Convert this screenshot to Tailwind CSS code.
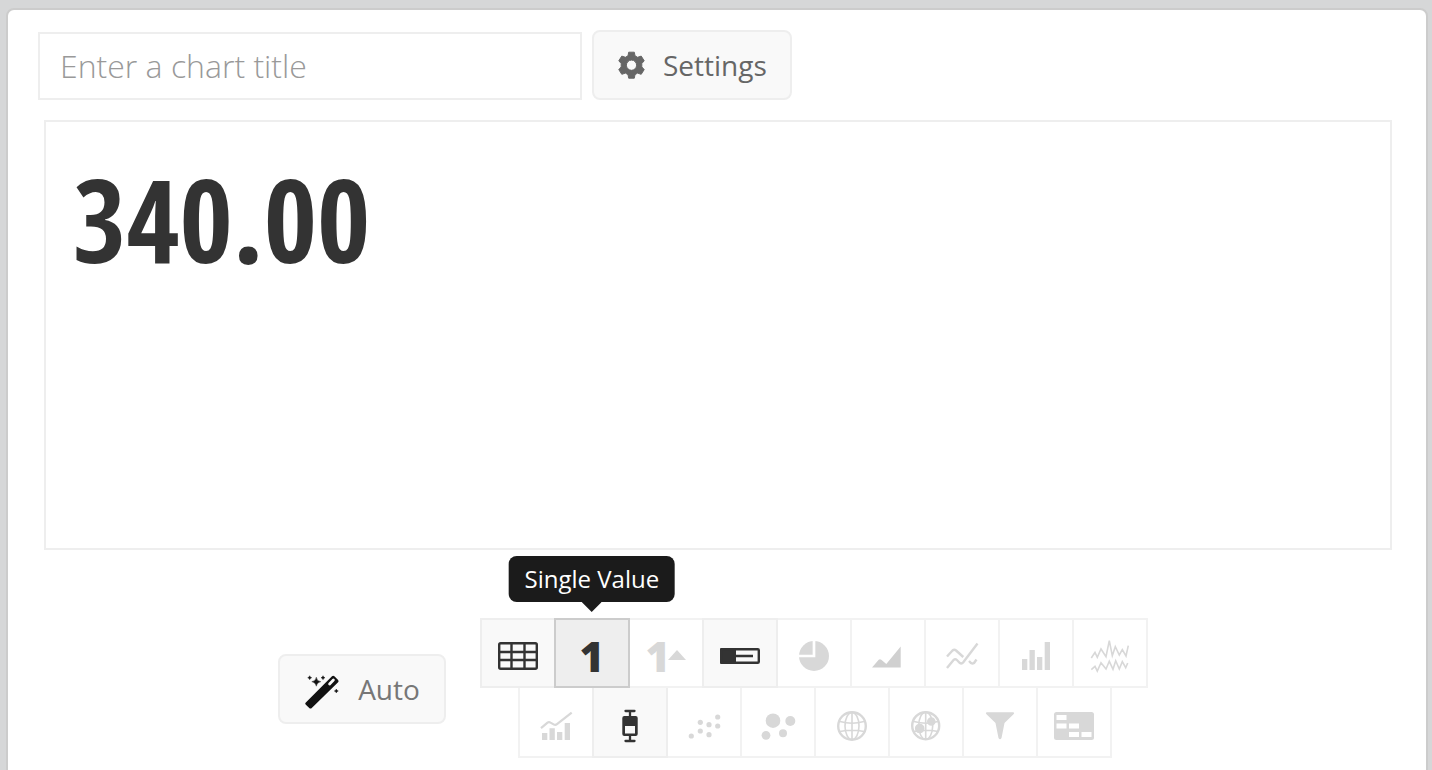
<!DOCTYPE html>
<html lang="en">
<head>
  <meta charset="UTF-8" />
  <meta name="viewport" content="width=device-width, initial-scale=1.0"/>
  <title>Chart Builder</title>
  <script src="https://cdn.jsdelivr.net/npm/@tailwindcss/browser@4"></script>
</head>
<body class="bg-[#d6d7d8] font-['Open_Sans',sans-serif] pl-1.5 pr-1">

  <main class="mt-2 min-h-[800px] bg-white border-2 border-[#ccc] rounded-lg">

    <!-- Title and settings -->
    <div class="flex items-end gap-2.5 pt-5 pl-[30px]">
      <input type="text" aria-label="Chart title" placeholder="Enter a chart title" class="w-[544px] h-[68px] px-5 pb-0.5 border-2 border-[#eee] text-[32px] font-light text-[#333] placeholder:text-[#999]" />
      <button class="flex items-center gap-[17px] h-[70px] pl-6 pr-[23px] bg-[#f9f9f9] border-2 border-[#eee] rounded-lg text-[28px] text-[#666]">
        <svg class="size-7" viewBox="0 0 28 28" fill="currentColor" stroke="currentColor" stroke-linejoin="round"><path fill-rule="evenodd" d="M10.700 1.200h5.600l.7 3.600 2.600 1.500 3.600-1.200 3 4.700-2.400 2.700v3.400l2.400 2.700-3 4.700-3.600-1.200-2.600 1.500-.7 3.600h-5.600l-.7-3.600-2.600-1.500-3.600 1.200-3-4.700 2.400-2.700v-3.400l-2.400-2.700 3-4.700 3.600 1.200 2.600-1.500zM13.500 9.100a5.100 5.100 0 1 0 0 10.200 5.100 5.100 0 0 0 0-10.200z"/></svg>
        Settings
      </button>
    </div>

    <!-- Chart preview -->
    <section class="mt-5 ml-9 mr-[34px] h-[430px] border-2 border-[#eee] px-[27px] pt-4">
      <p class="font-['Open_Sans_Condensed','Open_Sans',sans-serif] text-[115px] leading-[162px] font-bold text-[#333]">340.00</p>
    </section>

    <!-- Chart types -->
    <div class="mt-[68px] pr-2 flex justify-center items-center gap-[34px]">
      <button class="mt-0.5 flex items-center gap-[18px] h-[70px] px-6 bg-[#f9f9f9] border-2 border-[#eee] rounded-lg text-[28px] text-[#777]">
        <svg class="w-9 h-10" viewBox="0 0 36 40" fill="#111">
          <path d="M1.600 33.800L28 7.200q1.200-1 2.400 0l3.700 3.800q1 1.200 0 2.300L7.500 39.200q-1 .8-2 0l-3.900-3.800q-.8-.8 0-1.600z"/>
          <path d="M25.600 15l3.800-3.900" stroke="#f9f9f9" stroke-width="2.800" stroke-linecap="round"/>
          <path d="M12.300 8.200q.6 4 4.500 4.500-3.900.6-4.500 4.500-.6-3.900-4.500-4.500 3.900-.5 4.500-4.500zM5.700 6.700q.3 1.700 2 2-1.700.3-2 2-.3-1.700-2-2 1.700-.3 2-2zM19 6.700q.3 1.700 2 2-1.700.3-2 2-.3-1.700-2-2 1.700-.3 2-2zM32.300 20q.3 1.700 2 2-1.700.3-2 2-.3-1.700-2-2 1.700-.3 2-2z" stroke="#111" stroke-width=".4"/>
        </svg>
        Auto
      </button>

      <div class="flex flex-col items-center">
        <div class="flex pl-0.5 text-[#d8d8d8]">
          <button aria-label="Table" class="-ml-0.5 w-19 h-[70px] pt-1.5 flex justify-center items-center border-2 border-[#eee] bg-[#f9f9f9] text-[#333]">
            <svg class="w-12 h-10" viewBox="0 0 48 40" fill="none" stroke="currentColor" stroke-width="2.400"><rect x="5.200" y="7.200" width="37.600" height="25.600" rx="1.500"/><path d="M17.500 7v26M30.500 7v26M5 16h38M5 24h38"/></svg>
          </button>
          <button aria-describedby="tip" class="relative z-10 -ml-0.5 w-19 h-[70px] pt-1 flex justify-center items-center border-2 border-[#ccc] bg-[#eee] text-[42px] font-extrabold text-[#333]">
            1
            <span id="tip" role="tooltip" class="absolute bottom-full left-1/2 -translate-x-1/2 mb-[18px] h-[46px] px-4 bg-[#1b1b1b] rounded-lg text-2xl leading-[46px] font-normal text-white whitespace-nowrap">Single Value
              <svg class="absolute top-full left-1/2 -translate-x-1/2 w-5 h-2.5" viewBox="0 0 20 10" fill="#1b1b1b"><path d="M0 0h20L10 10z"/></svg>
            </span>
          </button>
          <button aria-label="Single Value with Trend" class="-ml-0.5 w-19 h-[70px] pt-1 flex justify-center items-center border-2 border-[#f2f2f2] text-[42px] font-extrabold">
            1
            <svg class="-ml-0.5 w-[18px] h-2.5" viewBox="0 0 18 10" fill="currentColor"><path d="M0 10L9 0l9 10z"/></svg>
          </button>
          <button aria-label="Bullet" class="relative -ml-0.5 w-19 h-[70px] pt-1.5 flex justify-center items-center border-2 border-[#eee] bg-[#f9f9f9] text-[#333]">
            <svg class="w-12 h-10" viewBox="0 0 48 40" fill="none" stroke="currentColor" stroke-width="2.400"><rect x="5.200" y="13.200" width="37.600" height="13.600" rx="1"/><path fill="currentColor" stroke-linejoin="round" d="M5.200 13.200h13.600v13.600H5.200zM19 20h18"/></svg>
          </button>
          <button aria-label="Pie" class="-ml-0.5 w-19 h-[70px] pt-1.5 flex justify-center items-center border-2 border-[#f2f2f2]">
            <svg class="w-12 h-10" viewBox="0 0 48 40"><circle cx="24" cy="20" r="15" fill="currentColor"/><path d="M24 4v16H8" fill="none" stroke="#fff" stroke-width="2.700"/></svg>
          </button>
          <button aria-label="Area" class="-ml-0.5 w-19 h-[70px] pt-1.5 flex justify-center items-center border-2 border-[#f2f2f2] text-[#d0d0d0]">
            <svg class="w-12 h-10" viewBox="0 0 48 40" fill="currentColor"><path d="M8 31.500l6.700-7.800q1.300-1 2.600 0l5 4.300L36.700 10.500v21z"/></svg>
          </button>
          <button aria-label="Line" class="-ml-0.5 w-19 h-[70px] pt-1.5 flex justify-center items-center border-2 border-[#f2f2f2]">
            <svg class="w-12 h-10" viewBox="0 0 48 40" fill="none" stroke="currentColor" stroke-width="2.400"><path d="M9 20.500l5.500-6q1.800-1.500 3.600 0l7.200 6.500M9 32l6.500-8q1.700-1.600 3.400 0l3 3q1.800 1.200 3.400-.8L39.500 7.500M31 25l2 2q1.500 1 3 0l2.500-3.500"/></svg>
          </button>
          <button aria-label="Column" class="-ml-0.5 w-19 h-[70px] pt-1.5 flex justify-center items-center border-2 border-[#f2f2f2]">
            <svg class="w-12 h-10" viewBox="0 0 48 40" fill="currentColor"><path d="M10 23h5.300v11H10zM17.500 14h5.300v20h-5.300zM25 21h5.300v13H25zM32.700 6H38v28h-5.300z"/></svg>
          </button>
          <button aria-label="Sparklines" class="-ml-0.5 w-19 h-[70px] pt-1.5 flex justify-center items-center border-2 border-[#f2f2f2]">
            <svg class="w-12 h-10" viewBox="0 0 48 40" fill="none" stroke="currentColor" stroke-width="1.600"><path d="M5.300 22L9 16.300l2.300 5L15 13l5 7.700 3.300-16 3 15 3-9 4 8.300 3-5.300L40 20l2.300-10.300M5.300 33.700L9 30.300l2.300 4.700L15 26.700l5 6.300 3.300-7.700 3.700 8 2.700-8.600 3.600 8.300 3-7.300 3.400 6L41.700 27"/></svg>
          </button>
        </div>

        <div class="flex pl-1 text-[#d8d8d8]">
          <button aria-label="Combo" class="-ml-0.5 w-19 h-[70px] pt-1.5 flex justify-center items-center border-2 border-t-0 border-[#f2f2f2]">
            <svg class="w-12 h-10" viewBox="0 0 48 40" fill="currentColor"><path d="M10 28h5.300v7H10zM17.500 23.300h5.300V35h-5.300zM25 27h5.300v8H25zM32.700 18H38v17h-5.300z"/><path d="M9 23.200l6.500-5.600q1.500-1 3 0l3.500 2q1.500.8 3-.4L39.700 7.700" fill="none" stroke="currentColor" stroke-width="2.200"/></svg>
          </button>
          <button aria-label="Box Plot" class="relative -ml-0.5 w-19 h-[70px] pt-1.5 flex justify-center items-center border-2 border-t-0 border-[#eee] bg-[#f9f9f9] text-[#333]">
            <svg class="w-12 h-10" viewBox="0 0 48 40" fill="currentColor"><path d="M19.500 6h9M24 6v30M19.500 36h9" stroke="currentColor" stroke-width="2.300" stroke-linecap="round"/><rect x="16.300" y="11" width="15.400" height="20" rx="2"/><path d="M19 21h10v7.500H19z" fill="#f9f9f9"/></svg>
          </button>
          <button aria-label="Scatter" class="-ml-0.5 w-19 h-[70px] pt-1.5 flex justify-center items-center border-2 border-t-0 border-[#f2f2f2]">
            <svg class="w-12 h-10" viewBox="0 0 48 40" fill="currentColor"><circle cx="11.300" cy="31" r="2.600"/><circle cx="20.300" cy="17.300" r="2.600"/><circle cx="20.300" cy="26" r="2.600"/><circle cx="29" cy="19.700" r="2.600"/><circle cx="29" cy="29.700" r="2.600"/><circle cx="37.700" cy="12" r="2.600"/><circle cx="37.700" cy="21" r="2.600"/></svg>
          </button>
          <button aria-label="Bubble" class="-ml-0.5 w-19 h-[70px] pt-1.5 flex justify-center items-center border-2 border-t-0 border-[#f2f2f2]">
            <svg class="w-12 h-10" viewBox="0 0 48 40" fill="currentColor"><circle cx="19" cy="15.700" r="7.300"/><circle cx="36.300" cy="16" r="5"/><circle cx="12" cy="30.300" r="4.400"/><circle cx="29" cy="28.300" r="4"/></svg>
          </button>
          <button aria-label="Map" class="-ml-0.5 w-19 h-[70px] pt-1.5 flex justify-center items-center border-2 border-t-0 border-[#f2f2f2]">
            <svg class="w-12 h-10" viewBox="0 0 48 40" fill="none" stroke="currentColor" stroke-width="1.600"><circle cx="24" cy="21" r="13.800" stroke-width="2.400"/><ellipse cx="24" cy="21" rx="7" ry="13.500"/><path d="M24 7v28M12 16.500q12 3.500 24 0M12 26.500q12-2.500 24 0"/></svg>
          </button>
          <button aria-label="Bubble Map" class="-ml-0.5 w-19 h-[70px] pt-1.5 flex justify-center items-center border-2 border-t-0 border-[#f2f2f2]">
            <svg class="w-12 h-10" viewBox="0 0 48 40" fill="none" stroke="currentColor" stroke-width="1.600"><circle cx="23.700" cy="20.700" r="13.500" stroke-width="2.400"/><ellipse cx="23.700" cy="20.700" rx="7" ry="13.500"/><path d="M23.700 7v28M12 16.500q12 3.500 24 0M12 26.500q12-2.500 24 0"/><circle cx="17.700" cy="23.500" r="4" fill="currentColor"/><circle cx="29.300" cy="16.500" r="3.500" fill="currentColor"/></svg>
          </button>
          <button aria-label="Funnel" class="-ml-0.5 w-19 h-[70px] pt-1.5 flex justify-center items-center border-2 border-t-0 border-[#f2f2f2]">
            <svg class="w-12 h-10" viewBox="0 0 48 40" fill="currentColor"><path d="M11 7.300h26q2 .5.500 2L28.500 18l-3 15q-1.500 2.500-3 0l-3-15-9-8.700q-1.500-1.500.5-2z"/></svg>
          </button>
          <button aria-label="Treemap" class="-ml-0.5 w-19 h-[70px] pt-1.5 flex justify-center items-center border-2 border-t-0 border-[#f2f2f2]">
            <svg class="w-12 h-10" viewBox="0 0 48 40"><rect x="4" y="7" width="40" height="28" rx="2.500" fill="currentColor"/><path fill="#fff" d="M6.500 10h10v5h-10zM6.500 18.500h10v5h-10zM19 18.500h10v5H19zM19 27h10v5H19zM31.500 27h10v5h-10z"/></svg>
          </button>
        </div>
      </div>
    </div>
  </main>

</body>
</html>
